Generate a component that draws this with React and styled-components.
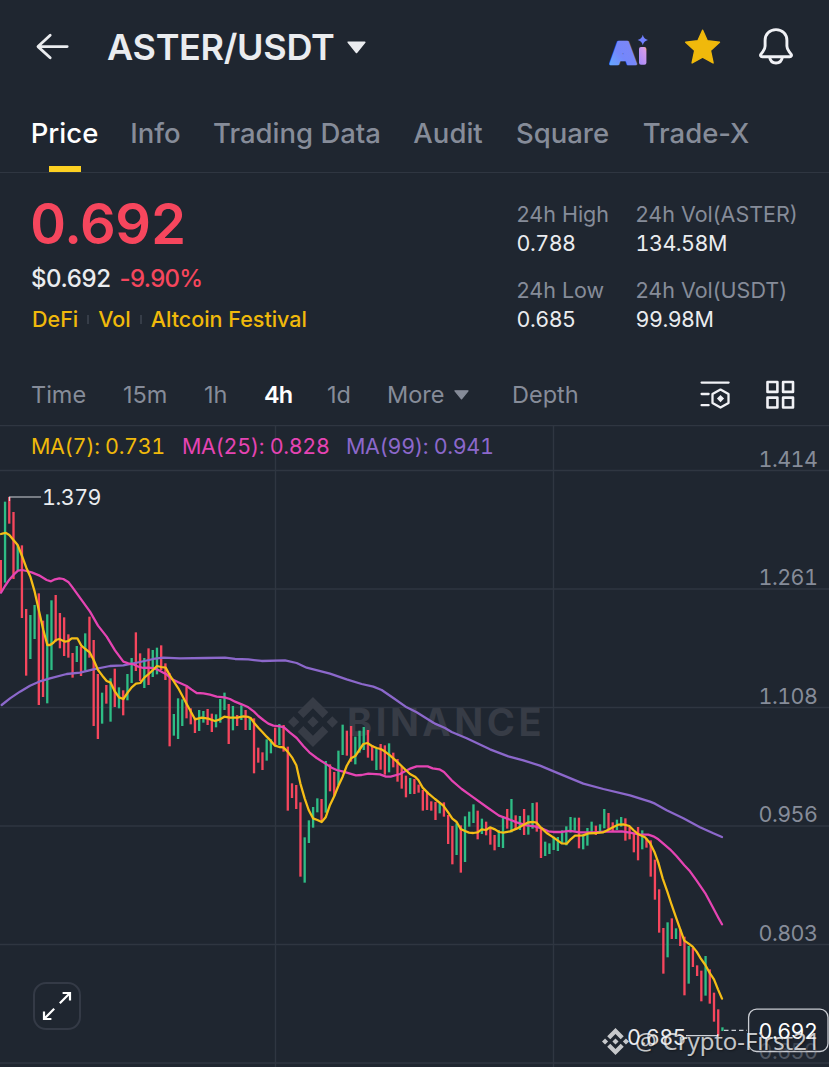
import React from 'react'
import styled, { createGlobalStyle } from 'styled-components'
import { SiBinance } from 'react-icons/si'

const colors = {
  background: '#1f2630',
  line: '#2f3641',
  text: '#eaecef',
  muted: '#868c99',
  red: '#f6465d',
  green: '#2ebd85',
  yellow: '#f0b90b',
  magenta: '#e544b3',
  purple: '#8c68cb',
  watermark: '#373c46',
}

const GlobalStyle = createGlobalStyle`
  * {
    box-sizing: border-box;
  }

  body {
    margin: 0;
    background: ${colors.background};
    color: ${colors.text};
    font-family: Inter, 'Liberation Sans', sans-serif;
  }
`

const Page = styled.div`
  display: flex;
  flex-direction: column;
  width: 829px;
  height: 1067px;
  overflow: hidden;
  background: ${colors.background};
`

const Header = styled.header`
  display: flex;
  align-items: center;
  height: 94px;
  padding: 0 34px 0 35px;
`

const Pair = styled.h1`
  margin: -1px 12px 0 36px;
  width: 228px;
  font-size: 36px;
  line-height: 44px;
  font-weight: 600;
  letter-spacing: -0.3px;
  white-space: nowrap;
`

const Actions = styled.div`
  display: flex;
  align-items: center;
  gap: 35px;
  margin-left: auto;
`

const Tabs = styled.nav`
  display: flex;
  gap: 34px;
  height: 79px;
  padding-left: 32px;
  border-bottom: 1px solid ${colors.line};
`

const Tab = styled.div`
  display: flex;
  flex-direction: column;
  justify-content: space-between;
  align-items: center;
  width: ${({ $width }) => $width}px;
  padding-top: 22px;
  font-size: 27.5px;
  line-height: 34px;
  font-weight: 500;
  white-space: nowrap;
  color: ${({ $active }) => ($active ? '#fff' : colors.muted)};
`

const Underline = styled.div`
  width: 32px;
  height: 6px;
  background: #fcd022;
`

const Summary = styled.section`
  display: flex;
  justify-content: space-between;
  height: 191px;
  padding: 18px 32px 0;
`

const LastPrice = styled.div`
  margin-left: -2px;
  font-size: 56px;
  line-height: 66px;
  font-weight: 600;
  font-variant-numeric: tabular-nums;
  letter-spacing: -0.8px;
  color: ${colors.red};
`

const Change = styled.div`
  display: flex;
  gap: 9px;
  margin: 7px 0 0 -1px;
  font-size: 24px;
  line-height: 30px;
  font-weight: 500;
  letter-spacing: -0.4px;

  em {
    font-style: normal;
    letter-spacing: -0.7px;
    color: ${colors.red};
  }
`

const Tags = styled.div`
  display: flex;
  align-items: center;
  margin-top: 11px;
  font-size: 21.5px;
  line-height: 28px;
  font-weight: 500;
  color: ${colors.yellow};
`

const TagDivider = styled.i`
  width: 2px;
  height: 9px;
  margin: 0 9px;
  background: #363d48;
`

const Stats = styled.dl`
  display: grid;
  grid-template-columns: 119px 161px;
  grid-auto-rows: 76px;
  margin: 9px 0 0;
`

const Stat = styled.div`
  font-size: 21.5px;
  line-height: 29px;
  white-space: nowrap;

  dt {
    margin-left: -0.5px;
    color: ${colors.muted};
  }

  dd {
    margin: 0 0 0 -0.5px;
    font-variant-numeric: tabular-nums;
    letter-spacing: -0.5px;
  }
`

const Intervals = styled.div`
  display: flex;
  align-items: center;
  height: 61px;
  padding: 0 34px 0 32px;
  font-size: 23.5px;
  color: ${colors.muted};
`

const Interval = styled.span`
  width: ${({ $width }) => $width}px;
  margin-left: -1px;
  margin-right: 1px;
  white-space: nowrap;
  font-weight: ${({ $active }) => ($active ? 600 : 400)};
  letter-spacing: ${({ $active }) => ($active ? -0.8 : 0)}px;
  color: ${({ $active }) => ($active ? '#fff' : 'inherit')};

  svg {
    margin-left: 10px;
    vertical-align: 3px;
  }
`

const Tools = styled.div`
  display: flex;
  gap: 35px;
  margin-left: auto;
`

const ChartPanel = styled.section`
  position: relative;
  height: 642px;
  font-variant-numeric: tabular-nums;
`

const Plot = styled.svg`
  display: block;
  letter-spacing: -0.5px;
`

const Legend = styled.div`
  position: absolute;
  top: 7px;
  left: 31px;
  display: flex;
  font-size: 21.5px;
  line-height: 28px;
  letter-spacing: -0.35px;
  white-space: nowrap;
`

const LegendItem = styled.span`
  width: ${({ $width }) => $width}px;
  color: ${({ $color }) => $color};
`

const ExpandButton = styled.button`
  position: absolute;
  left: 33px;
  top: 557px;
  display: flex;
  align-items: center;
  justify-content: center;
  width: 48px;
  height: 48px;
  padding: 0;
  border: 2px solid #343a46;
  border-radius: 13px;
  background: none;
`

const Credit = styled.div`
  position: absolute;
  left: 602px;
  top: 600px;
  display: flex;
  align-items: center;
  gap: 6px;
  font-family: 'Noto Sans', 'Open Sans', sans-serif;
  font-size: 24px;
  line-height: 32px;
  letter-spacing: -0.1px;
  white-space: nowrap;
  color: rgba(255, 255, 255, 0.75);
  text-shadow: 1px 1px 2px rgba(0, 0, 0, 0.4);
`

const tabs = [
  { label: 'Price', width: 65, active: true },
  { label: 'Info', width: 49 },
  { label: 'Trading Data', width: 166 },
  { label: 'Audit', width: 68 },
  { label: 'Square', width: 93 },
  { label: 'Trade-X', width: 106 },
]

const stats = [
  { label: '24h High', value: '0.788' },
  { label: '24h Vol(ASTER)', value: '134.58M' },
  { label: '24h Low', value: '0.685' },
  { label: '24h Vol(USDT)', value: '99.98M' },
]

const averages = [
  { label: 'MA(7): 0.731', color: colors.yellow, width: 151 },
  { label: 'MA(25): 0.828', color: colors.magenta, width: 164 },
  { label: 'MA(99): 0.941', color: colors.purple, width: 150 },
]

const priceLevels = [
  { y: 45.5, label: '1.414' },
  { y: 164, label: '1.261' },
  { y: 282.5, label: '1.108' },
  { y: 401, label: '0.956' },
  { y: 519.5, label: '0.803' },
  { y: 638, label: '0.650' },
]

// Series are stored in thirds of a pixel, [direction, high, low]
const candles = `
d405,500 u230,473 d216,296 d261,462 u360,437 d361,579 d552,752 u570,702 u540,642 d505,840
d587,816 u568,835 u526,735 d510,650 d564,670 d577,693 d628,698 d684,758 u663,711 d665,753
u625,737 d575,698 d645,903 d747,942 u803,896 d780,836 u760,890 d731,846 u787,850 d796,871
u747,826 u699,774 d622,738 d685,768 u699,789 d670,780 u675,756 u668,748 d661,735 d715,765
d745,964 u867,932 u820,942 u823,903 d785,880 d850,898 d878,924 u855,918 u858,893 d852,900
d866,921 u868,907 u822,893 u803,855 d837,957 u843,916 d870,903 u841,885 d855,915 u877,915
d880,1045 d968,1013 d982,1035 u943,1007 u943,985 d908,960 u897,960 d900,980 d965,1157 d1075,1119
d1080,1152 d1132,1355 u1237,1373 u1186,1254 u1146,1208 u1120,1162 d1122,1188 u1008,1163 d1018,1099 d1041,1113
u977,1080 u899,990 d917,992 d903,1010 u935,1018 u917,983 u906,975 d915,998 d960,1007 u970,1035
d957,1034 d961,1049 u955,1042 d983,1027 d1002,1070 d1025,1091 d1052,1117 u1059,1107 d1062,1107 d1079,1103
d1095,1157 d1100,1155 d1129,1157 d1131,1185 u1135,1165 d1132,1175 d1170,1257 d1203,1318 u1195,1290 d1201,1343
u1174,1311 u1160,1205 u1138,1194 d1157,1243 u1181,1227 d1190,1231 d1209,1259 d1230,1276 u1215,1266 u1175,1269
d1152,1211 u1122,1222 d1171,1215 u1173,1215 d1152,1230 u1171,1229 u1134,1211 d1132,1220 d1209,1299 u1250,1293
u1255,1287 u1235,1275 u1236,1278 u1216,1255 u1204,1261 u1176,1223 u1178,1217 d1178,1270 u1228,1273 u1209,1262
u1190,1226 d1202,1230 u1198,1223 u1152,1210 d1164,1213 d1192,1220 u1184,1215 u1176,1205 d1180,1247 d1205,1243
d1225,1282 d1206,1306 u1216,1273 d1240,1268 d1246,1355 d1304,1424 d1393,1523 d1509,1646 u1492,1597 d1480,1542
u1510,1542 d1513,1563 d1535,1711 u1563,1676 d1569,1626 d1621,1653 d1637,1729 u1593,1712 d1633,1736 d1703,1790
d1753,1833 u1807,1818
`
  .trim()
  .split(/\s+/)
  .map((entry) => {
    const [high, low] = entry.slice(1).split(',').map(Number)
    return { up: entry[0] === 'u', high, low }
  })

const movingAverages = [
  {
    color: colors.purple,
    points:
      '5,840 30,820 60,800 90,782 117,770 150,760 200,747 240,743 280,733 330,723 370,721 420,711 460,702 490,698 540,700 620,699 675,698 705,702 745,703 785,708 855,706 890,714 920,728 990,746 1040,763 1085,777 1120,785 1145,795 1180,819 1220,847 1250,862 1305,896 1335,909 1355,921 1400,940 1470,973 1525,994 1570,1006 1620,1022 1670,1043 1750,1076 1810,1092 1890,1111 1950,1130 1965,1136 2000,1156 2050,1180 2100,1207 2140,1225 2166,1236',
  },
  {
    color: colors.magenta,
    points:
      '3,503 15,483 28,464 41,449 54,437 66,435 80,438 95,442 117,451 140,465 153,469 165,463 178,460 190,462 206,472 218,488 244,524 270,560 294,602 320,635 345,676 370,710 385,715 400,718 415,725 430,729 446,728 463,730 475,735 490,743 500,748 515,762 535,772 560,783 575,794 590,804 610,805 630,809 650,815 673,817 690,822 705,830 725,838 745,847 762,860 775,873 790,885 805,896 820,902 840,904 852,907 870,923 890,939 910,963 928,982 950,999 975,1015 995,1028 1010,1035 1030,1040 1050,1046 1068,1051 1085,1050 1105,1046 1140,1048 1158,1055 1172,1055 1200,1047 1215,1039 1230,1031 1250,1024 1283,1024 1298,1030 1318,1033 1332,1041 1355,1066 1385,1092 1420,1117 1460,1146 1497,1172 1520,1180 1550,1192 1580,1201 1605,1204 1625,1210 1645,1219 1660,1221 1685,1221 1710,1218 1740,1222 1780,1222 1815,1220 1865,1219 1890,1223 1920,1229 1945,1229 1960,1234 1975,1243 1990,1256 2010,1273 2030,1294 2053,1321 2070,1339 2090,1367 2116,1405 2140,1450 2155,1478 2166,1498',
  },
  {
    color: '#f5bd16',
    points:
      '3,327 10,325 18,324 28,330 41,346 53,360 66,393 79,428 91,455 104,500 117,558 130,615 142,660 150,660 158,655 168,645 178,642 195,650 205,648 215,640 232,640 244,662 256,672 269,682 281,705 294,735 307,752 320,768 332,773 345,800 357,817 370,822 383,803 395,787 408,776 421,774 433,758 446,747 459,735 471,723 484,726 497,728 509,750 535,790 560,837 585,883 605,878 625,881 645,888 660,883 673,875 690,878 712,878 730,874 745,876 752,879 762,893 775,908 787,921 800,935 812,947 825,962 838,966 850,967 863,980 876,997 889,1021 901,1075 914,1120 926,1155 939,1180 952,1185 965,1191 977,1177 990,1140 1003,1113 1015,1083 1028,1055 1040,1023 1053,1000 1066,993 1078,975 1090,957 1102,954 1116,963 1130,969 1142,972 1154,979 1170,991 1190,1009 1217,1035 1230,1047 1245,1055 1255,1065 1268,1088 1285,1105 1305,1122 1330,1142 1345,1163 1357,1181 1370,1191 1382,1212 1395,1218 1407,1223 1420,1224 1433,1222 1445,1213 1458,1215 1470,1207 1485,1213 1497,1221 1510,1223 1530,1219 1550,1211 1570,1200 1585,1192 1600,1191 1610,1193 1623,1208 1640,1224 1660,1237 1685,1255 1700,1256 1712,1243 1725,1232 1750,1231 1765,1225 1790,1224 1810,1222 1825,1214 1840,1206 1855,1199 1870,1198 1888,1203 1900,1215 1915,1228 1935,1237 1950,1254 1963,1280 1975,1313 1988,1360 2002,1400 2015,1440 2028,1477 2040,1511 2053,1547 2065,1555 2078,1565 2090,1580 2102,1600 2116,1620 2128,1642 2142,1663 2154,1693 2166,1721',
  },
]

const BackIcon = () => (
  <svg width="36" height="28" viewBox="0 0 36 28" fill="none" stroke={colors.text} strokeWidth="2.8" strokeLinecap="round" strokeLinejoin="round">
    <path d="M15.2 2.2 3 13.6l12.2 11.2M3.4 13.6h28.8" />
  </svg>
)

const Caret = ({ width, height, color }) => (
  <svg width={width} height={height} viewBox="0 0 18 12">
    <path d="M1.2 1h15.6L9 10.6z" fill={color} stroke={color} strokeWidth="1.6" strokeLinejoin="round" />
  </svg>
)

const AiIcon = () => (
  <svg width="40" height="40" viewBox="0 0 40 40">
    <defs>
      <linearGradient id="ai-a" x1="0" y1="1" x2="0.8" y2="0">
        <stop offset="0" stopColor="#62b0ff" />
        <stop offset="0.45" stopColor="#7487fb" />
        <stop offset="1" stopColor="#7f86f5" />
      </linearGradient>
      <linearGradient id="ai-i" x1="1" y1="0" x2="0.2" y2="1">
        <stop offset="0" stopColor="#ffb34d" />
        <stop offset="0.2" stopColor="#d59be8" />
        <stop offset="1" stopColor="#a78bfa" />
      </linearGradient>
    </defs>
    <text
      x="1"
      y="36.5"
      fontSize="30"
      fontWeight="900"
      textLength="26.5"
      lengthAdjust="spacingAndGlyphs"
      fill="url(#ai-a)"
      stroke="url(#ai-a)"
      strokeWidth="2.6"
      strokeLinejoin="round"
    >
      A
    </text>
    <rect x="30" y="20" width="7.4" height="17.8" rx="2" fill="url(#ai-i)" />
    <path d="M33.800 7.800q1 4.200 5.200 5.200-4.200 1-5.200 5.200-1-4.200-5.200-5.200 4.200-1 5.200-5.200z" fill="#7180ff" />
  </svg>
)

const StarIcon = () => (
  <svg width="38" height="38" viewBox="0 0 38 38">
    <path
      d="m18.600 2.200 4.700 10.600 12.200 1.400-9 8.400 2.600 12.400-10.500-5.800L8.100 35l2.600-12.400-9-8.400 12.200-1.400z"
      fill={colors.yellow}
      stroke={colors.yellow}
      strokeWidth="1.4"
      strokeLinejoin="round"
    />
  </svg>
)

const BellIcon = () => (
  <svg width="38" height="40" viewBox="0 0 38 40" fill="none" stroke="#f0f1f5" strokeWidth="2.9" strokeLinejoin="round">
    <path d="M19 2.600C12.400 2.600 8.100 7.300 8.100 13.300v5.700c0 2.200-.8 3.900-2.200 5.700l-1.900 2.400c-1 1.400-.4 2.700 1.300 2.700h27.400c1.700 0 2.300-1.300 1.300-2.700l-1.900-2.400c-1.400-1.800-2.200-3.500-2.200-5.700v-5.700C29.900 7.300 25.600 2.600 19 2.600z" />
    <path d="M12.600 30c.6 3.900 3.200 6 6.400 6s5.800-2.100 6.400-6" />
  </svg>
)

const SettingsIcon = () => (
  <svg width="30" height="30" viewBox="0 0 30 30" fill="none" stroke="#f0f1f5" strokeWidth="2.3" strokeLinecap="round" strokeLinejoin="round">
    <path d="M1.6 2.6h27M1.600 14h7M1.600 25.200h7" />
    <path d="m20.500 9.600 8 4.500v9l-8 4.500-8-4.500v-9z" />
    <path d="m20.500 15 3.600 3.600-3.600 3.600-3.600-3.600z" fill="#f0f1f5" stroke="none" />
  </svg>
)

const GridIcon = () => (
  <svg width="30" height="30" viewBox="0 0 30 30" fill="none" stroke="#f0f1f5" strokeWidth="2.6" strokeLinejoin="round">
    <path d="M2.5 2h9.900v9.900H2.500zM18.100 2H28v9.900h-9.900zM2.500 17.600h9.900v9.900H2.500zM18.100 17.600H28v9.900h-9.900z" />
  </svg>
)

const ExpandIcon = () => (
  <svg width="30" height="30" viewBox="0 0 30 30" fill="none" stroke="#fff" strokeWidth="2.2">
    <path d="M17.800 12.200 28 2M20.600 2H28v7.400M12.200 17.800 2 28M2 20.600V28h7.400" />
  </svg>
)

const Chart = () => (
  <Plot width="829" height="642" viewBox="0 0 829 642">
    <g stroke={colors.line} strokeWidth="1.4">
      <path d="M0 .6h829M275.5 0v642M553.5 0v642" />
      {priceLevels.map(({ y }) => (
        <path key={y} d={`M0 ${y}h829`} />
      ))}
    </g>

    <g fill={colors.watermark}>
      <SiBinance x="288" y="272" size="50" color={colors.watermark} />
      <text x="347" y="311" fontSize="38" fontWeight="700" letterSpacing="3.2" style={{ letterSpacing: 'inherit' }} textLength="194">
        BINANCE
      </text>
    </g>

    <g fill={colors.muted} fontSize="21.5" textAnchor="end">
      {priceLevels.map(({ y, label }) => (
        <text key={label} x="817.5" y={y - 4} opacity={label === '0.650' ? 0.5 : 1}>
          {label}
        </text>
      ))}
    </g>

    <g transform="scale(0.33333)" fill="none" strokeLinecap="round" strokeLinejoin="round">
      {candles.map(({ up, high, low }, idx) => (
        <path
          key={idx}
          d={`M${2.5 + idx * 12.66} ${high}V${low}`}
          stroke={up ? colors.green : colors.red}
          strokeWidth="7"
          strokeLinecap="butt"
        />
      ))}
      {movingAverages.map(({ color, points }) => (
        <polyline key={color} points={points} stroke={color} strokeWidth="6.8" />
      ))}
    </g>

    <path d="M9.5 76v-4H41M686 610.7h32" stroke="#cfd2d8" strokeWidth="1.2" fill="none" />
    <path d="M724 605.3h23" stroke="#cfd2d8" strokeWidth="1.2" strokeDasharray="4.5 3" />
    <g fill={colors.text} fontSize="21.5">
      <text x="42" y="80">1.379</text>
      <text x="627" y="620">0.685</text>
    </g>
    <rect x="748.6" y="584.2" width="79.4" height="42.3" rx="8" fill={colors.background} fillOpacity="0.4" stroke="#c9ccd2" strokeWidth="1.3" />
    <text x="817.5" y="614" fontSize="21.5" textAnchor="end" fill="#fff">
      0.692
    </text>
  </Plot>
)

const App = () => {
  return (
    <>
      <GlobalStyle />
      <Page>
        <Header>
          <BackIcon />
          <Pair>ASTER/USDT</Pair>
          <Caret width={19} height={13} color={colors.text} />
          <Actions>
            <AiIcon />
            <StarIcon />
            <BellIcon />
          </Actions>
        </Header>

        <Tabs>
          {tabs.map(({ label, width, active }) => (
            <Tab key={label} $width={width} $active={active}>
              {label}
              {active && <Underline />}
            </Tab>
          ))}
        </Tabs>

        <Summary>
          <div>
            <LastPrice>0.692</LastPrice>
            <Change>
              <span>$0.692</span>
              <em>-9.90%</em>
            </Change>
            <Tags>
              DeFi
              <TagDivider />
              Vol
              <TagDivider />
              Altcoin Festival
            </Tags>
          </div>
          <Stats>
            {stats.map(({ label, value }) => (
              <Stat key={label}>
                <dt>{label}</dt>
                <dd>{value}</dd>
              </Stat>
            ))}
          </Stats>
        </Summary>

        <Intervals>
          <Interval $width={92}>Time</Interval>
          <Interval $width={81}>15m</Interval>
          <Interval $width={60}>1h</Interval>
          <Interval $width={63} $active>
            4h
          </Interval>
          <Interval $width={60}>1d</Interval>
          <Interval $width={125}>
            More
            <Caret width={15} height={10} color={colors.muted} />
          </Interval>
          <Interval $width={70}>Depth</Interval>
          <Tools>
            <SettingsIcon />
            <GridIcon />
          </Tools>
        </Intervals>

        <ChartPanel>
          <Chart />
          <Legend>
            {averages.map(({ label, color, width }) => (
              <LegendItem key={label} $color={color} $width={width}>
                {label}
              </LegendItem>
            ))}
          </Legend>
          <ExpandButton aria-label="Expand chart">
            <ExpandIcon />
          </ExpandButton>
          <Credit>
            <SiBinance size={27} />
            @ Crypto-First21
          </Credit>
        </ChartPanel>
      </Page>
    </>
  )
}

export default App
